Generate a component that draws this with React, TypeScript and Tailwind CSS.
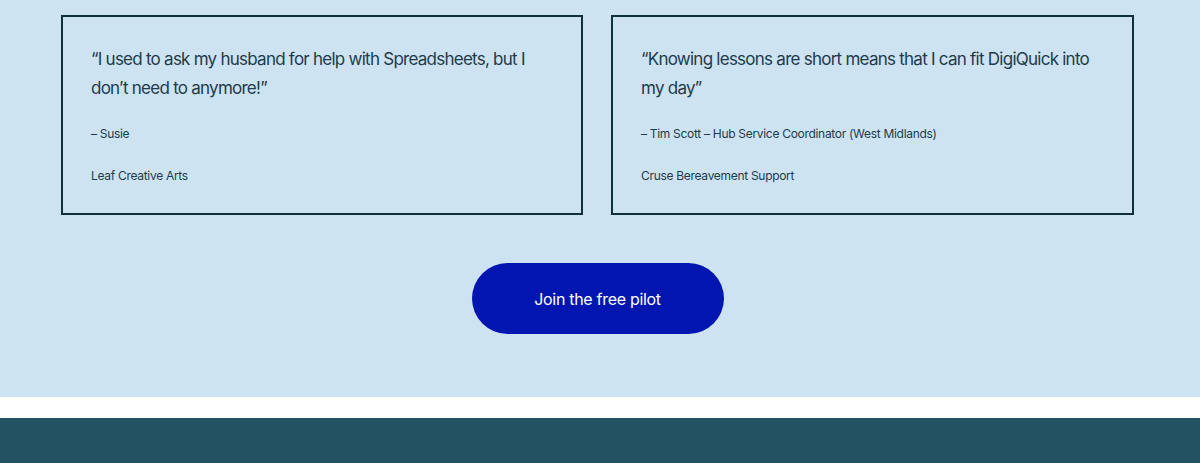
export default function App() {
  const testimonials = [
    {
      quote:
        "“I used to ask my husband for help with Spreadsheets, but I don’t need to anymore!”",
      who: "– Susie",
      org: "Leaf Creative Arts",
    },
    {
      quote:
        "“Knowing lessons are short means that I can fit DigiQuick into my day”",
      who: "– Tim Scott – Hub Service Coordinator (West Midlands)",
      org: "Cruse Bereavement Support",
    },
  ];

  return (
    <div
      className="w-full bg-white"
      style={{ fontFamily: "Inter, 'Noto Sans', sans-serif" }}
    >
      {/* testimonials */}
      <section className="flex flex-col items-center bg-[#cde3f1] pt-[15px] pr-[66px] pb-[63px] pl-[61px]">
        <div className="flex w-full gap-[28px]">
          {testimonials.map((t, i) => (
            <div
              key={t.org}
              className={`flex h-[200px] flex-col border-2 border-[#10303f] pt-[28px] pr-[30px] pl-[28px] text-[#1d3b4c] ${i === 0 ? "w-[522px]" : "flex-1"}`}
            >
              <p className="text-[17px] leading-[29px] tracking-[-0.75px]">
                {t.quote}
              </p>
              <p className="mt-[21px] text-[12px] leading-[20px] tracking-[-0.3px]">
                {t.who}
              </p>
              <p className="mt-[22px] text-[12px] leading-[20px] tracking-[-0.3px]">
                {t.org}
              </p>
            </div>
          ))}
        </div>

        <button
          type="button"
          className="mt-[48px] flex h-[71px] w-[252px] items-center justify-center rounded-full bg-[#0115b0] text-[16px] tracking-[-0.3px] text-white"
        >
          Join the free pilot
        </button>
      </section>

      {/* spacer + footer */}
      <div className="h-[21px] bg-white" />
      <footer className="h-[45px] bg-[#235263]" />
    </div>
  );
}
